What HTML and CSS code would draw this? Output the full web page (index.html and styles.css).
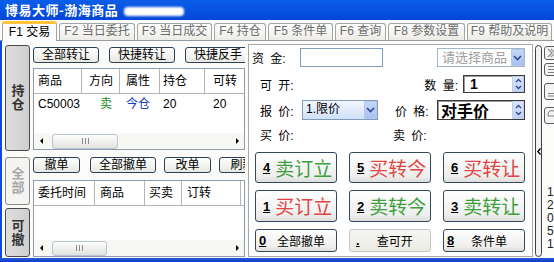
FILE: index.html
```html
<!DOCTYPE html>
<html lang="zh-CN">
<head>
    <meta charset="UTF-8">
    <title>博易大师-渤海商品</title>
    <link rel="stylesheet" href="styles.css">
</head>
<body>

    <!-- barra de título -->
    <div class="titlebar">
        <span class="title">博易大师-渤海商品</span>
        <span class="redact"></span>
    </div>

    <!-- abas F1..F9 -->
    <div class="tabbar">
        <div class="tab tab-on">F1 交易</div>
        <div class="tab">F2 当日委托</div>
        <div class="tab">F3 当日成交</div>
        <div class="tab">F4 持仓</div>
        <div class="tab">F5 条件单</div>
        <div class="tab">F6 查询</div>
        <div class="tab">F8 参数设置</div>
        <div class="tab">F9 帮助及说明</div>
    </div>

    <div class="main">

        <!-- abas verticais -->
        <div class="vtabs">
            <div class="vtab vtab-on vtab-hold"><span class="vtext">持仓</span></div>
            <div class="vtab vtab-off vtab-all"><span class="vtext">全部</span></div>
            <div class="vtab vtab-on vtab-cancel"><span class="vtext">可撤</span></div>
        </div>

        <!-- listas: posições e ordens -->
        <div class="lists">
            <div class="btnrow">
                <button class="sbtn sbtn-l">全部转让</button>
                <button class="sbtn sbtn-l">快捷转让</button>
                <button class="sbtn sbtn-l">快捷反手</button>
            </div>

            <div class="grid grid-hold">
                <div class="ghead">
                    <span>商品</span>
                    <span>方向</span>
                    <span>属性</span>
                    <span>持仓</span>
                    <span>可转</span>
                </div>
                <div class="grow">
                    <span>C50003</span>
                    <span class="sell">卖</span>
                    <span class="today">今仓</span>
                    <span>20</span>
                    <span>20</span>
                </div>
                <div class="hscroll">
                    <span class="sarrow"><i class="tri-l"></i></span>
                    <span class="thumb"><i class="grip"></i></span>
                    <span class="sarrow sarrow-r"><i class="tri-r"></i></span>
                </div>
            </div>

            <div class="btnrow btnrow-2">
                <button class="sbtn sbtn-s sbtn-first">撤单</button>
                <button class="sbtn sbtn-l">全部撤单</button>
                <button class="sbtn sbtn-s">改单</button>
                <button class="sbtn sbtn-s">刷新</button>
            </div>

            <div class="grid grid-order">
                <div class="ghead">
                    <span>委托时间</span>
                    <span>商品</span>
                    <span>买卖</span>
                    <span>订转</span>
                </div>
                <div class="hscroll">
                    <span class="sarrow"><i class="tri-l"></i></span>
                    <span class="thumb thumb-2"><i class="grip"></i></span>
                    <span class="sarrow sarrow-r"><i class="tri-r"></i></span>
                </div>
            </div>
        </div>

        <!-- painel de ordem -->
        <div class="panel">
            <div class="frow frow-1">
                <span class="flabel fl-money">资 金:</span>
                <span class="field f-money"></span>
                <span class="fill"></span>
                <span class="field combo f-product">
                    <span class="combo-text muted">请选择商品</span>
                    <span class="dropbtn">
                        <svg width="9" height="6" viewBox="0 0 9 6"><path d="M1 1 L4.5 4.5 L8 1" fill="none" stroke="#2d4a8a" stroke-width="1.6"/></svg>
                    </span>
                </span>
            </div>

            <div class="frow frow-2">
                <span class="flabel fl-left">可 开:</span>
                <span class="fill"></span>
                <span class="flabel fl-qty">数 量:</span>
                <span class="field spin f-qty">
                    <span class="spin-text">1</span>
                    <span class="spinbtn">
                        <svg width="7" height="12" viewBox="0 0 7 12"><path d="M1 4 L3.5 1.5 L6 4 M1 8 L3.5 10.5 L6 8" fill="none" stroke="#2d4a8a" stroke-width="1.3"/></svg>
                    </span>
                </span>
            </div>

            <div class="frow frow-3">
                <span class="flabel fl-left fl-quote">报 价:</span>
                <span class="field combo f-type">
                    <span class="combo-text">1.限价</span>
                    <span class="dropbtn">
                        <svg width="9" height="6" viewBox="0 0 9 6"><path d="M1 1 L4.5 4.5 L8 1" fill="none" stroke="#2d4a8a" stroke-width="1.6"/></svg>
                    </span>
                </span>
                <span class="flabel fl-price">价 格:</span>
                <span class="field spin f-price">
                    <span class="spin-text price-text">对手价</span>
                    <span class="spinbtn">
                        <svg width="7" height="12" viewBox="0 0 7 12"><path d="M1 4 L3.5 1.5 L6 4 M1 8 L3.5 10.5 L6 8" fill="none" stroke="#2d4a8a" stroke-width="1.3"/></svg>
                    </span>
                </span>
            </div>

            <div class="frow frow-4">
                <span class="flabel fl-left fl-buy">买 价:</span>
                <span class="flabel">卖 价:</span>
            </div>

            <!-- botões de ordem -->
            <div class="keys">
                <button class="kbtn"><span class="key">4</span><span class="kname green">卖订立</span></button>
                <button class="kbtn"><span class="key">5</span><span class="kname red">买转今</span></button>
                <button class="kbtn"><span class="key">6</span><span class="kname red">买转让</span></button>
                <button class="kbtn"><span class="key">1</span><span class="kname red">买订立</span></button>
                <button class="kbtn"><span class="key">2</span><span class="kname green">卖转今</span></button>
                <button class="kbtn"><span class="key">3</span><span class="kname green">卖转让</span></button>
                <button class="kbtn kbtn-s"><span class="key">0</span><span class="klabel">全部撤单</span></button>
                <button class="kbtn kbtn-s kbtn-off"><span class="key">.</span><span class="klabel">查可开</span></button>
                <button class="kbtn kbtn-s"><span class="key">8</span><span class="klabel">条件单</span></button>
            </div>
        </div>

        <!-- divisor recolhível -->
        <div class="capsule">
            <svg width="4" height="7" viewBox="0 0 4 7"><path d="M3.5 0.5 L0.8 3.5 L3.5 6.5" fill="none" stroke="#000" stroke-width="1.3"/></svg>
        </div>

        <!-- barra lateral -->
        <div class="side">
            <div class="ico ico-1">
                <svg width="14" height="12" viewBox="0 0 14 12"><path d="M3 2 L7 6 L3 10 M6 2 L10 6 L6 10" fill="none" stroke="#909090" stroke-width="1.2"/></svg>
            </div>
            <div class="ico ico-2">
                <svg width="14" height="11" viewBox="0 0 14 11"><path d="M3 2.5 H11 M3 5.5 H11 M3 8.5 H11" fill="none" stroke="#808080" stroke-width="1"/></svg>
            </div>
            <div class="ico ico-3">
                <svg width="14" height="15" viewBox="0 0 14 15"><path d="M3 9.5 H11 M3 12 H11" fill="none" stroke="#808080" stroke-width="1"/></svg>
            </div>
            <div class="ico ico-4">
                <svg width="14" height="15" viewBox="0 0 14 15"><path d="M3 8 V6 A4 3.5 0 0 1 11 6 V8 M3 8 H11" fill="none" stroke="#808080" stroke-width="1"/></svg>
            </div>
            <div class="digits">1<br>2<br>0<br>5<br>1</div>
        </div>

    </div>

    <div class="bottomline"></div>

</body>
</html>
```

FILE: styles.css
```css
* {
    box-sizing: border-box;
}

body {
    margin: 0;
    width: 554px;
    height: 262px;
    overflow: hidden;
    display: flex;
    flex-direction: column;
    font-family: "Liberation Sans", "Noto Sans CJK SC", sans-serif;
    font-size: 12px;
    color: #000;
    background-color: #fbfbf9;
}

/* barra de título */
.titlebar {
    height: 20px;
    display: flex;
    align-items: center;
    padding-left: 5px;
    background: linear-gradient(#0b5ee9, #0446d8);
}

.title {
    color: #fff;
    font-family: "Noto Sans CJK SC", sans-serif;
    font-weight: bold;
    font-size: 13px;
    line-height: 16px;
    letter-spacing: 0.5px;
}

.redact {
    width: 60px;
    height: 9px;
    margin-left: 6px;
    margin-top: 2px;
    border-radius: 4px;
    background-color: #fff;
    filter: blur(1px);
}

/* abas */
.tabbar {
    height: 21px;
    display: flex;
    align-items: flex-end;
    gap: 2px;
    padding-left: 2px;
    border-bottom: 1px solid #919b9c;
    background-color: #fbfbf9;
}

.tab {
    height: 17px;
    border: 1px solid #a0a6a8;
    border-bottom: none;
    border-radius: 3px 3px 0 0;
    background: linear-gradient(#ffffff, #ecebe6);
    color: #6c6c6c;
    line-height: 15px;
    text-align: center;
    white-space: nowrap;
}

.tab-on {
    height: 20px;
    margin-bottom: -1px;
    border-top: 3px solid #ffc23a;
    background: #fcfcfe;
    color: #000;
    line-height: 16px;
}

.tab:nth-child(1) { width: 55px; }
.tab:nth-child(2) { width: 76px; }
.tab:nth-child(3) { width: 75px; }
.tab:nth-child(4) { width: 52px; }
.tab:nth-child(5) { width: 65px; }
.tab:nth-child(6) { width: 51px; }
.tab:nth-child(7) { width: 77px; }
.tab:nth-child(8) { width: 85px; }

.main {
    flex: 1;
    display: flex;
    border-left: 2px solid #0b4be0;
}

.bottomline {
    height: 4px;
    background: linear-gradient(#2a5ad8, #0a3cc8);
}

/* abas verticais */
.vtabs {
    width: 25px;
    margin: 4px 3px 0 3px;
    display: flex;
    flex-direction: column;
}

.vtab {
    display: flex;
    align-items: center;
    justify-content: center;
    border: 1px solid #4a4a4a;
    border-radius: 3px;
}

.vtext {
    writing-mode: vertical-rl;
    text-orientation: upright;
    font-family: "Noto Sans CJK SC", sans-serif;
    font-weight: bold;
    font-size: 13px;
    letter-spacing: 1px;
    line-height: 14px;
}

.vtab-on {
    background: linear-gradient(to right, #dedede, #cfcfcf);
    color: #333;
}

.vtab-off {
    background-color: #f4f4f2;
    border-color: #8a8a8a;
    color: #a8a8a8;
}

.vtab-hold { height: 106px; }
.vtab-all { height: 48px; margin-top: 6px; }
.vtab-cancel { height: 49px; margin-top: 3px; }

/* listas */
.lists {
    width: 212px;
    display: flex;
    flex-direction: column;
    overflow: hidden;
    padding-bottom: 1px;
}

.btnrow {
    display: flex;
    gap: 10px;
    height: 16px;
    margin-top: 6px;
}

.btnrow-2 {
    gap: 8px;
    margin-top: 7px;
}

.sbtn-first {
    margin-right: 2px;
}

.sbtn {
    flex: none;
    height: 16px;
    padding: 0;
    border: 1px solid #2b3f55;
    border-radius: 3px;
    background: linear-gradient(#ffffff, #e8e8e2);
    font-family: "Liberation Sans", "Noto Sans CJK SC", sans-serif;
    font-size: 12px;
    line-height: 13px;
    color: #000;
    white-space: nowrap;
}

.sbtn-l { width: 66px; }
.sbtn-s { width: 47px; }

.grid {
    display: flex;
    flex-direction: column;
    border: 1px solid #8f9cab;
    background-color: #fff;
}

.grid-hold {
    height: 82px;
    margin-top: 5px;
}

.grid-order {
    flex: 1;
    margin-top: 7px;
}

.ghead {
    display: flex;
    height: 25px;
    border-bottom: 1px solid #b4b4b4;
}

.ghead span {
    flex: none;
    border-right: 1px solid #b4b4b4;
    line-height: 24px;
    white-space: nowrap;
}

.grow {
    display: flex;
    height: 16px;
    margin-top: 2px;
    line-height: 16px;
}

.grow span {
    flex: none;
}

.grid-hold .ghead span:nth-child(1), .grid-hold .grow span:nth-child(1) { width: 48px; padding-left: 4px; }
.grid-hold .ghead span:nth-child(2), .grid-hold .grow span:nth-child(2) { width: 38px; padding-left: 7px; }
.grid-hold .ghead span:nth-child(3), .grid-hold .grow span:nth-child(3) { width: 40px; padding-left: 6px; }
.grid-hold .ghead span:nth-child(4), .grid-hold .grow span:nth-child(4) { width: 45px; padding-left: 3px; }
.grid-hold .ghead span:nth-child(5), .grid-hold .grow span:nth-child(5) { width: 39px; padding-left: 8px; border-right: none; }

.grid-hold .grow span.sell {
    padding-left: 18px;
}

.sell { color: #1f8a1f; }
.today { color: #1a3cc0; }

.grid-order .ghead span:nth-child(1) { width: 61px; padding-left: 4px; }
.grid-order .ghead span:nth-child(2) { width: 50px; padding-left: 5px; }
.grid-order .ghead span:nth-child(3) { width: 37px; padding-left: 4px; }
.grid-order .ghead span:nth-child(4) { width: 59px; padding-left: 5px; }

/* barra de rolagem horizontal */
.hscroll {
    display: flex;
    align-items: center;
    height: 16px;
    margin-top: auto;
    background-color: #f7f7f3;
}

.sarrow {
    width: 14px;
    height: 16px;
    display: flex;
    align-items: center;
    justify-content: center;
}

.sarrow-r {
    margin-left: auto;
}

.tri-l, .tri-r {
    width: 0;
    height: 0;
    border-top: 3px solid transparent;
    border-bottom: 3px solid transparent;
}

.tri-l { border-right: 3px solid #000; }
.tri-r { border-left: 3px solid #000; }

.thumb {
    width: 66px;
    height: 15px;
    margin-left: 4px;
    display: flex;
    align-items: center;
    justify-content: center;
    border: 1px solid #b9c4d4;
    border-radius: 3px;
    background: linear-gradient(#fdfdfd, #e2e2de);
}

.thumb-2 {
    width: 55px;
}

.grip {
    width: 7px;
    height: 6px;
    background: repeating-linear-gradient(to right, #8c8c8c 0 1px, transparent 1px 3px);
}

/* painel de ordem */
.panel {
    width: 285px;
    margin: 3px 0 1px 3px;
    border: 1px solid #a8a8a8;
    background-color: #fff;
    display: flex;
    flex-direction: column;
}

.frow {
    display: flex;
    align-items: center;
}

.frow-1 { height: 19px; margin-top: 3px; }
.frow-2 { height: 18px; margin-top: 8px; }
.frow-3 { height: 20px; margin-top: 7px; }
.frow-4 { height: 17px; margin-top: 6px; }

.flabel {
    flex: none;
    word-spacing: 3px;
    white-space: nowrap;
}

.fl-money { width: 51px; padding-left: 3px; }
.fl-left { padding-left: 11px; }
.fl-quote { width: 53px; }
.fl-qty { margin-right: 5px; }
.fl-price { width: 42px; margin-left: 17px; }
.fl-buy { width: 144px; }

.fill {
    flex: 1;
}

.field {
    flex: none;
    height: 100%;
    display: flex;
    align-items: stretch;
    border: 1px solid #7f9db9;
    background-color: #fff;
}

.f-money { width: 83px; }

.f-product {
    width: 88px;
    margin-right: 7px;
    border-color: #a5b4c8;
}

.f-type {
    width: 76px;
    background: linear-gradient(#f2f7ff, #cfe0f8);
}

.f-qty, .f-price {
    border: 1px solid #3a3a3a;
    box-shadow: inset 1px 1px 0 #9a9a9a;
}

.f-qty { width: 62px; margin-right: 7px; }
.f-price { width: 88px; margin-right: 7px; }

.combo-text {
    flex: 1;
    padding-left: 3px;
    line-height: 17px;
    white-space: nowrap;
}

.f-product .combo-text {
    text-align: right;
    padding-right: 4px;
}

.muted {
    color: #a0a0a0;
    font-size: 13px;
}

.dropbtn {
    width: 13px;
    display: flex;
    align-items: center;
    justify-content: center;
    border: 1px solid #b6c8ec;
    background: linear-gradient(#c4d6fa, #a9c1f0);
}

.spin-text {
    flex: 1;
    padding-left: 6px;
    font-weight: bold;
    font-size: 14px;
    line-height: 16px;
}

.price-text {
    padding-left: 3px;
    font-family: "Noto Sans CJK SC", sans-serif;
    font-size: 16px;
    line-height: 18px;
}

.spinbtn {
    width: 12px;
    display: flex;
    align-items: center;
    justify-content: center;
    border: 1px solid #c0cfee;
    background: linear-gradient(#dbe5fb, #c0d1f4);
}

/* botões de ordem */
.keys {
    display: grid;
    grid-template-columns: 82px 82px 82px;
    grid-template-rows: 31px 32px 23px;
    column-gap: 12px;
    row-gap: 7px;
    margin-top: 9px;
    padding-left: 6px;
}

.kbtn {
    display: flex;
    align-items: center;
    padding: 0 0 0 7px;
    border: 1px solid #34495e;
    border-radius: 3px;
    background: linear-gradient(#ffffff, #eeeeec 80%, #dddddb);
    font-family: "Liberation Sans", "Noto Sans CJK SC", sans-serif;
    color: #000;
}

.key {
    font-weight: bold;
    font-size: 13px;
    text-decoration: underline;
}

.kname {
    margin-left: 5px;
    font-family: "Noto Sans CJK SC", sans-serif;
    font-size: 19px;
    line-height: 22px;
}

.green { color: #3e9e3e; }
.red { color: #e04444; }

.kbtn-s {
    padding-left: 3px;
}

.klabel {
    flex: 1;
    text-align: center;
    font-size: 12px;
}

.kbtn-off {
    border-color: #c4c4c0;
    background: linear-gradient(#f6f6f2, #ebeae4);
    padding-left: 6px;
}

/* divisor e barra lateral */
.capsule {
    width: 7px;
    margin: 4px 0 1px 2px;
    display: flex;
    align-items: center;
    justify-content: center;
    border: 1px solid #404040;
    border-radius: 4px;
    background-color: #f2f2f2;
}

.side {
    width: 10px;
    margin-left: 2px;
    display: flex;
    flex-direction: column;
    overflow: hidden;
}

.ico {
    width: 14px;
    flex: none;
    border: 1px solid #5a5a5a;
    border-radius: 3px;
    background-color: #f4f4f4;
}

.ico svg {
    display: block;
}

.ico-1 { height: 14px; margin-top: 5px; }
.ico-2 { height: 13px; margin-top: 3px; }
.ico-3 { height: 17px; margin-top: 7px; }
.ico-4 { height: 17px; margin-top: 7px; }

.digits {
    margin-top: auto;
    margin-bottom: 7px;
    padding-left: 3px;
    line-height: 13px;
    color: #222;
}
```
